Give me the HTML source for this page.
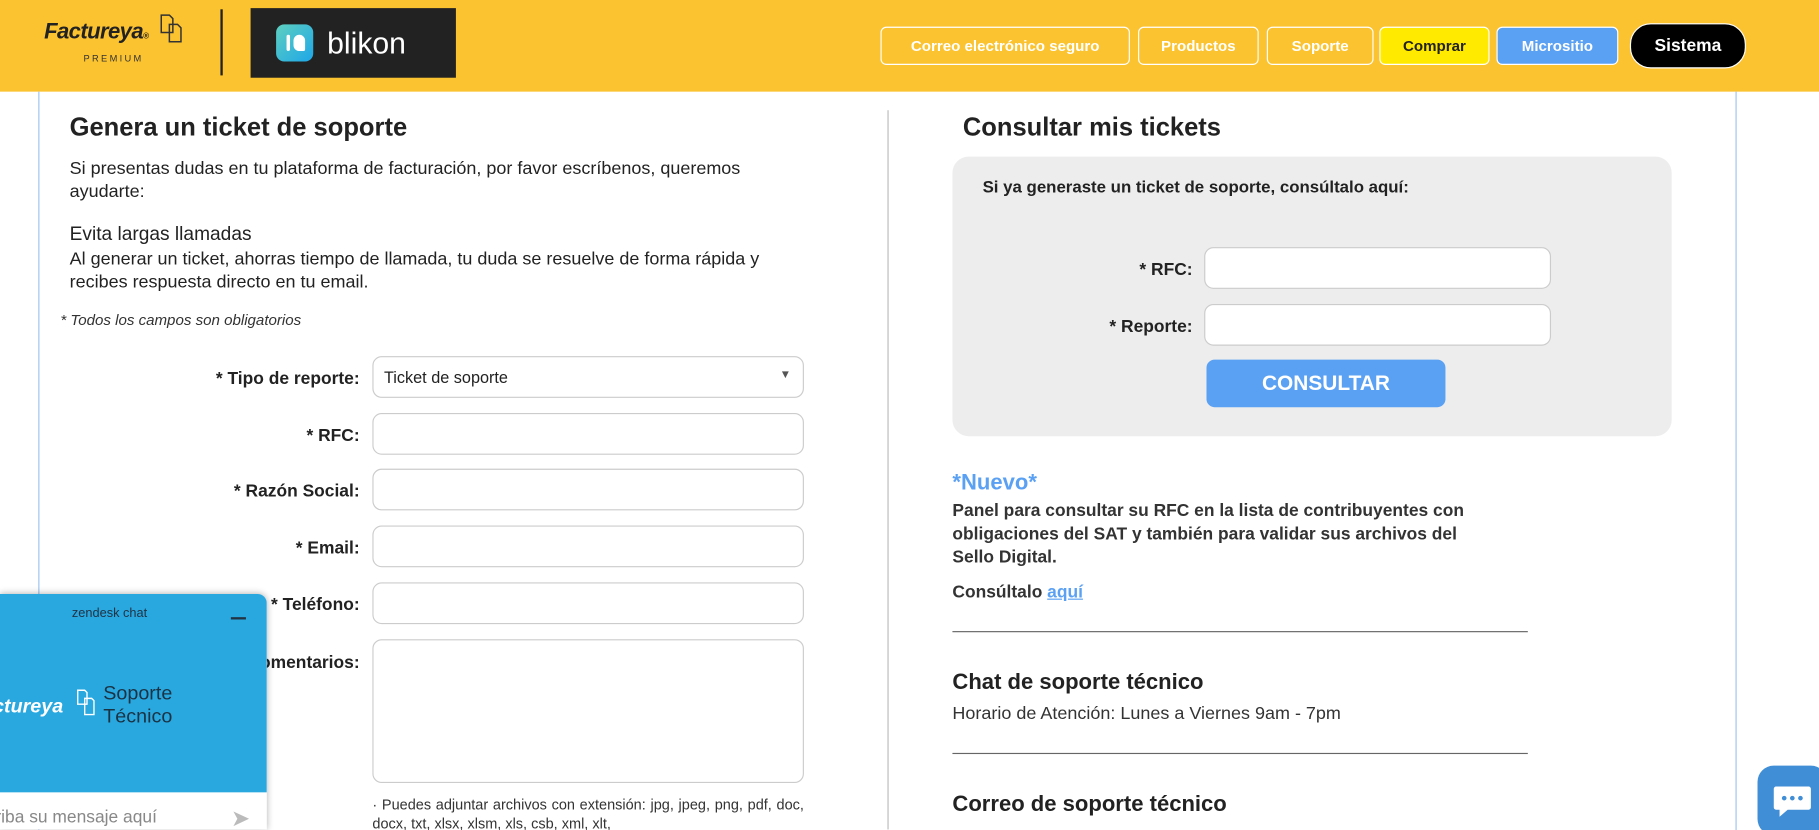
<!DOCTYPE html>
<html><head><meta charset="utf-8"><style>
html,body{margin:0;padding:0;overflow:hidden;background:#fff}
#w{width:1568px;height:715px;position:relative;transform:scale(1.16008);transform-origin:0 0;font-family:"Liberation Sans",sans-serif;color:#222}
.a{position:absolute}
.hdr{left:0;top:0;width:1568px;height:79px;background:#fcc331}
.nb{position:absolute;top:23px;height:33px;border:1px solid #fff;border-radius:5px;color:#fff;font-weight:bold;font-size:13px;display:flex;align-items:center;justify-content:center;box-sizing:border-box}
.lbl{position:absolute;width:250px;left:60px;text-align:right;font-weight:bold;font-size:15px}
.inp{position:absolute;left:321px;width:372px;height:36px;border:1px solid #ccc;border-radius:8px;box-sizing:border-box;background:#fff}
p{margin:0}
</style></head><body><div id="w">
<div class="a hdr"></div>
<div class="a" style="left:38px;top:17px;font-size:19px;font-weight:bold;font-style:italic;color:#222;letter-spacing:-0.5px">Factureya<span style="font-size:7px">®</span></div>
<svg class="a" style="left:137px;top:11px" width="22" height="28" viewBox="0 0 22 28"><path d="M2 2h7l3 3v12H2z M9 10h7l3 3v12H9z" fill="none" stroke="#333" stroke-width="1.3"/></svg>
<div class="a" style="left:72px;top:46px;font-size:8px;letter-spacing:2px;color:#333">PREMIUM</div>
<div class="a" style="left:190px;top:8px;width:2px;height:57px;background:#222"></div>
<div class="a" style="left:216px;top:7px;width:177px;height:60px;background:#222"></div>
<div class="a" style="left:238px;top:21px;width:32px;height:32px;border-radius:7px;background:linear-gradient(135deg,#5ecfbf,#1ea7e8)"></div>
<div class="a" style="left:247px;top:30px;width:3px;height:14px;background:#fff;border-radius:2px"></div>
<div class="a" style="left:253px;top:30px;width:10px;height:14px;background:#fff;border-radius:6px 6px 2px 6px"></div>
<div class="a" style="left:282px;top:22px;font-size:26px;color:#fff">blikon</div>
<div class="nb" style="left:759px;width:215px">Correo electrónico seguro</div>
<div class="nb" style="left:981px;width:104px">Productos</div>
<div class="nb" style="left:1092px;width:92px">Soporte</div>
<div class="nb" style="left:1189px;width:95px;background:#ffea00;color:#222">Comprar</div>
<div class="nb" style="left:1290px;width:105px;background:#5ba1f3">Micrositio</div>
<div class="nb" style="left:1405px;top:20px;height:39px;width:100px;background:#000;border-radius:18px;font-size:15px">Sistema</div>
<div class="a" style="left:33px;top:79px;width:1px;height:640px;background:#9cc3ef"></div>
<div class="a" style="left:1496px;top:79px;width:1px;height:640px;background:#9cc3ef"></div>
<div class="a" style="left:765px;top:95px;width:1px;height:620px;background:#bbb"></div>
<div class="a" style="left:60px;top:97px;font-size:22px;font-weight:bold">Genera un ticket de soporte</div>
<div class="a" style="left:60px;top:136px;width:630px;font-size:15.5px;line-height:20px">Si presentas dudas en tu plataforma de facturación, por favor escríbenos, queremos ayudarte:</div>
<div class="a" style="left:60px;top:193px;font-size:16.5px">Evita largas llamadas</div>
<div class="a" style="left:60px;top:214px;width:640px;font-size:15.5px;line-height:20px">Al generar un ticket, ahorras tiempo de llamada, tu duda se resuelve de forma rápida y recibes respuesta directo en tu email.</div>
<div class="a" style="left:52px;top:268px;font-size:13px;font-style:italic;color:#333">* Todos los campos son obligatorios</div>
<div class="lbl" style="top:318px">* Tipo de reporte:</div>
<div class="inp" style="top:307px;font-size:14px;padding:9px 9px"><span>Ticket de soporte</span><span style="position:absolute;right:10px;top:10px;font-size:10px;color:#555">▼</span></div>
<div class="lbl" style="top:367px">* RFC:</div><div class="inp" style="top:356px"></div>
<div class="lbl" style="top:415px">* Razón Social:</div><div class="inp" style="top:404px"></div>
<div class="lbl" style="top:464px">* Email:</div><div class="inp" style="top:453px"></div>
<div class="lbl" style="top:513px">* Teléfono:</div><div class="inp" style="top:502px"></div>
<div class="lbl" style="top:563px">* Comentarios:</div><div class="inp" style="top:551px;height:124px"></div>
<div class="a" style="left:321px;top:686px;width:372px;font-size:12.5px;line-height:16px;text-align:justify;color:#333">· Puedes adjuntar archivos con extensión: jpg, jpeg, png, pdf, doc, docx, txt, xlsx, xlsm, xls, csb, xml, xlt,</div>
<div class="a" style="left:830px;top:97px;font-size:22px;font-weight:bold">Consultar mis tickets</div>
<div class="a" style="left:821px;top:135px;width:620px;height:241px;background:#ededed;border-radius:14px"></div>
<div class="a" style="left:847px;top:154px;font-size:14.5px;font-weight:bold">Si ya generaste un ticket de soporte, consúltalo aquí:</div>
<div class="a" style="left:900px;top:224px;width:128px;text-align:right;font-weight:bold;font-size:15px">* RFC:</div>
<div class="inp" style="left:1038px;top:213px;width:299px"></div>
<div class="a" style="left:900px;top:273px;width:128px;text-align:right;font-weight:bold;font-size:15px">* Reporte:</div>
<div class="inp" style="left:1038px;top:262px;width:299px"></div>
<div class="a" style="left:1040px;top:310px;width:206px;height:41px;background:#5ba1f3;border-radius:7px;color:#fff;font-weight:bold;font-size:18px;display:flex;align-items:center;justify-content:center">CONSULTAR</div>
<div class="a" style="left:821px;top:406px;font-size:19px;font-weight:bold;color:#5ba1f3">*Nuevo*</div>
<div class="a" style="left:821px;top:431px;width:460px;font-size:15px;font-weight:bold;line-height:20px;color:#333">Panel para consultar su RFC en la lista de contribuyentes con obligaciones del SAT y también para validar sus archivos del Sello Digital.</div>
<div class="a" style="left:821px;top:502px;font-size:15px;font-weight:bold;color:#333">Consúltalo <span style="color:#5ba1f3;text-decoration:underline">aquí</span></div>
<div class="a" style="left:821px;top:544px;width:496px;height:1px;background:#666"></div>
<div class="a" style="left:821px;top:578px;font-size:19px;font-weight:bold;color:#222">Chat de soporte técnico</div>
<div class="a" style="left:821px;top:607px;font-size:15.5px;color:#333">Horario de Atención: Lunes a Viernes 9am - 7pm</div>
<div class="a" style="left:821px;top:649px;width:496px;height:1px;background:#666"></div>
<div class="a" style="left:821px;top:683px;font-size:19px;font-weight:bold;color:#222">Correo de soporte técnico</div>
<div class="a" style="left:0;top:512px;width:230px;height:203px;background:#fff;border-radius:0 8px 0 0;box-shadow:0 0 6px rgba(0,0,0,.3);overflow:hidden">
<div class="a" style="left:0;top:0;width:230px;height:171px;background:#29a8e0"></div>
<div class="a" style="left:62px;top:11px;font-size:11px;color:#234">zendesk chat</div>
<div class="a" style="left:199px;top:20px;width:13px;height:2px;background:#234"></div>
<div class="a" style="left:-6px;top:87px;font-size:17px;font-weight:bold;font-style:italic;color:#fff">ctureya</div>
<svg class="a" style="left:66px;top:82px" width="18" height="24" viewBox="0 0 18 24"><path d="M1 1h6l2 2v10H1z M7 8h6l2 2v12H7z" fill="none" stroke="#fff" stroke-width="1.2"/></svg>
<div class="a" style="left:89px;top:76px;font-size:17px;line-height:20px;color:#1a3344">Soporte<br>Técnico</div>
<div class="a" style="left:-4px;top:184px;font-size:15px;color:#888">riba su mensaje aquí</div>
<div class="a" style="left:199px;top:181px;font-size:20px;color:#bbb">➤</div>
</div>
<div class="a" style="left:1515px;top:660px;width:60px;height:60px;background:#3f8ed6;border-radius:14px"></div>
<svg class="a" style="left:1527px;top:676px" width="36" height="30" viewBox="0 0 36 30"><path d="M4 2h28a2 2 0 0 1 2 2v16a2 2 0 0 1-2 2H14l-7 6v-6H4a2 2 0 0 1-2-2V4a2 2 0 0 1 2-2z" fill="#fff"/><circle cx="11" cy="12" r="2" fill="#3f8ed6"/><circle cx="18" cy="12" r="2" fill="#3f8ed6"/><circle cx="25" cy="12" r="2" fill="#3f8ed6"/></svg>
</div></body></html>
